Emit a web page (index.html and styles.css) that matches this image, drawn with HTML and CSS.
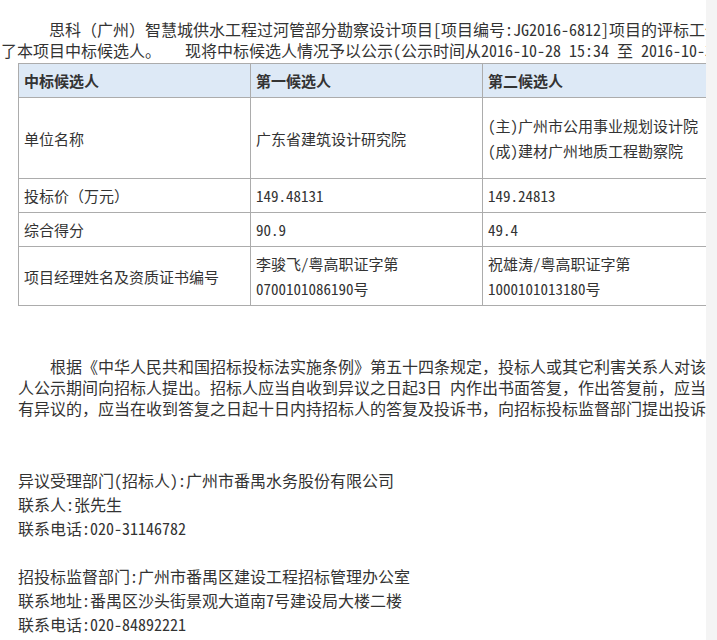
FILE: index.html
```html
<!DOCTYPE html>
<html lang="zh-CN">
<head>
  <meta charset="UTF-8" />
  <meta name="viewport" content="width=device-width, initial-scale=1.0"/>
  <title>中标候选人公示</title>
  <link rel="stylesheet" href="styles.css">
</head>
<body>
  <div class="page">
    <p class="intro">思科（广州）智慧城供水工程过河管部分勘察设计项目[项目编号:JG2016-6812]项目的评标工作已经结束，评标委员会推荐<br>了本项目中标候选人。&nbsp;&nbsp;&nbsp;现将中标候选人情况予以公示(公示时间从2016-10-28 15:34 至 2016-10-31 15:34)</p>

    <table class="result">
      <tr class="head">
        <th>中标候选人</th>
        <th>第一候选人</th>
        <th>第二候选人</th>
      </tr>
      <tr class="tall">
        <td>单位名称</td>
        <td>广东省建筑设计研究院</td>
        <td>(主)广州市公用事业规划设计院<br>(成)建材广州地质工程勘察院</td>
      </tr>
      <tr>
        <td>投标价（万元）</td>
        <td>149.48131</td>
        <td>149.24813</td>
      </tr>
      <tr>
        <td>综合得分</td>
        <td>90.9</td>
        <td>49.4</td>
      </tr>
      <tr>
        <td>项目经理姓名及资质证书编号</td>
        <td>李骏飞/粤高职证字第<br>0700101086190号</td>
        <td>祝雄涛/粤高职证字第<br>1000101013180号</td>
      </tr>
    </table>

    <p class="notice">根据《中华人民共和国招标投标法实施条例》第五十四条规定，投标人或其它利害关系人对该依法必须进行招标的项目的评标结果有异议的，应当在中标候选<br>人公示期间向招标人提出。招标人应当自收到异议之日起3日 内作出书面答复，作出答复前，应当暂停招标投标活动。投标人或其它利害关系人对答复仍<br>有异议的，应当在收到答复之日起十日内持招标人的答复及投诉书，向招标投标监督部门提出投诉。</p>

    <div class="contacts">
      <p>异议受理部门(招标人):广州市番禺水务股份有限公司<br>联系人:张先生<br>联系电话:020-31146782</p>
      <p>招投标监督部门:广州市番禺区建设工程招标管理办公室<br>联系地址:番禺区沙头街景观大道南7号建设局大楼二楼<br>联系电话:020-84892221</p>
    </div>
  </div>
</body>
</html>
```

FILE: styles.css
```css
body {
  margin: 0;
  background: #f4f4f4;
  font-family: "Noto Sans Mono CJK SC", "Noto Sans CJK SC", sans-serif;
  color: #333;
}

.page {
  width: 706px;
  height: 640px;
  overflow: hidden;
  background: #fff;
  white-space: nowrap;
}

.intro {
  margin: 0;
  padding: 19px 0 0 1px;
  font-size: 16px;
  line-height: 21px;
  text-indent: 48px;
}

.result {
  margin: 2px 0 0 18px;
  width: 697px;
  border-collapse: collapse;
  table-layout: fixed;
  font-size: 15px;
  line-height: 25px;
}

.result th,
.result td {
  border: 1px solid #acacac;
  padding: 4px 5px;
  text-align: left;
  vertical-align: middle;
}

.result .head th {
  background: #dde9f6;
  font-weight: bold;
}

.result .tall td {
  padding-top: 15px;
  padding-bottom: 15px;
}

.notice {
  margin: 50px 0 0 18px;
  font-size: 16px;
  line-height: 21px;
  text-indent: 32px;
}

.contacts {
  margin: 49px 0 0 18px;
  font-size: 16px;
  line-height: 24px;
}

.contacts p {
  margin: 0 0 24px;
}
```
